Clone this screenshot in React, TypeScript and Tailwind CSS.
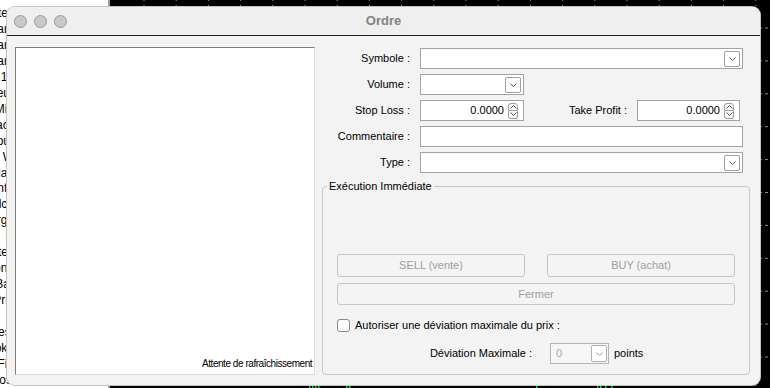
import React from 'react'

const sideWords = [
  'Ventes', 'Montant', 'Montant', 'Montant', '15', 'Valeur', 'Min', 'Facil', 'Jour', 'W', 'Plan', 'Vente',
  'Calcu', 'Marga', 'R', 'Ventes', 'Fond', 'Bar', 'Prix', 'I', 'Best', 'Stoke', 'Fin',
]

function Chevron({ up = false, color = '#555' }: { up?: boolean; color?: string }) {
  return (
    <svg width="7" height="4" viewBox="0 0 7 4" className="block">
      <path d={up ? 'M0.5 3.5 L3.5 0.5 L6.5 3.5' : 'M0.5 0.5 L3.5 3.5 L6.5 0.5'} fill="none" stroke={color} strokeWidth="1" />
    </svg>
  )
}

function Select({ className = '' }: { className?: string }) {
  return (
    <div className={`shrink-0 h-[21px] border border-[#a3a3a3] bg-white flex items-center justify-end pr-[2px] ${className}`}>
      <div className="w-[16px] h-[16px] border border-[#a0a0a0] rounded-[2px] bg-white flex items-center justify-center">
        <Chevron />
      </div>
    </div>
  )
}

function Spin({ className = '' }: { className?: string }) {
  return (
    <div className={`shrink-0 h-[21px] border border-[#a3a3a3] bg-white flex items-center justify-end pr-[5px] gap-[4px] ${className}`}>
      <span className="text-[11px] leading-none text-black">0.0000</span>
      <div className="flex flex-col">
        <div className="w-[10px] h-[8px] border border-[#a0a0a0] rounded-t-[3px] bg-white flex items-center justify-center">
          <Chevron up />
        </div>
        <div className="w-[10px] h-[8px] border border-t-0 border-[#a0a0a0] rounded-b-[3px] bg-white flex items-center justify-center">
          <Chevron />
        </div>
      </div>
    </div>
  )
}

function Row({ label, children }: { label: string; children: React.ReactNode }) {
  return (
    <div className="flex items-center h-[21px]">
      <span className="shrink-0 w-[88px] mr-[10px] text-right text-[11px] text-black">{label}</span>
      {children}
    </div>
  )
}

function ChartGrid() {
  const vx = Array.from({ length: 21 }, (_, i) => 33 + i * 32.2)
  const hy = Array.from({ length: 12 }, (_, i) => 28 + i * 32.9)
  return (
    <svg className="w-full h-full block" viewBox="0 0 658 388">
      {vx.map((x) => (
        <line key={x} x1={x} y1="0" x2={x} y2="388" stroke="#7f8da3" strokeWidth="1" strokeDasharray="1 4" />
      ))}
      {hy.map((y) => (
        <line key={y} x1="0" y1={y} x2="658" y2={y} stroke="#7f8da3" strokeWidth="1" strokeDasharray="3 3" />
      ))}
      {[198, 201, 204, 207, 235, 238, 425, 486, 489, 494, 500].map((x) => (
        <rect key={x} x={x} y="384" width="1.5" height="4" fill="#22c55e" />
      ))}
    </svg>
  )
}

export default function App() {
  return (
    <div className="relative w-[770px] h-[388px] overflow-hidden bg-black flex font-['Liberation_Sans',Arial,sans-serif]">
      {/* background app: side list */}
      <div className="w-[110px] shrink-0 bg-white border-r-2 border-[#9a9a9a] flex flex-col pt-[5px] text-[12px] leading-[16px] text-black">
        {sideWords.map((w, i) => (
          <div key={i} className="w-[14px] flex justify-end overflow-hidden whitespace-nowrap">
            {w}
          </div>
        ))}
        <div className="-ml-[12px] whitespace-nowrap">Closure</div>
      </div>
      {/* background app: chart */}
      <div className="flex-1">
        <ChartGrid />
      </div>

      {/* dialog window */}
      <div className="absolute left-[7px] top-[7px] w-[753px] h-[378px] rounded-[8px] bg-[#f3f3f3] ring-1 ring-[#c4c4c4] overflow-hidden flex flex-col">
        <div className="h-[29px] shrink-0 bg-[#efefef] border-b border-[#1e1e1e] grid grid-cols-[1fr_auto_1fr] items-center">
          <div className="flex items-center gap-[7px] pl-[7px]">
            <span className="w-[13px] h-[13px] rounded-full bg-[#c9c9c9] border border-[#9a9a9a]" />
            <span className="w-[13px] h-[13px] rounded-full bg-[#c9c9c9] border border-[#9a9a9a]" />
            <span className="w-[13px] h-[13px] rounded-full bg-[#c9c9c9] border border-[#9a9a9a]" />
          </div>
          <span className="text-[13px] font-bold text-[#828282]">Ordre</span>
          <div />
        </div>

        <div className="flex pl-[8px] pt-[11px] gap-[7px]">
          {/* left panel */}
          <div className="shrink-0 w-[300px] h-[328px] bg-white border border-t-[#7d7d7d] border-l-[#7d7d7d] border-r-[#dcdcdc] border-b-[#dcdcdc] flex items-end overflow-hidden pb-[3px] pl-[186px]">
            <span className="text-[10px] tracking-[-0.45px] text-black whitespace-nowrap">Attente de rafraîchissement</span>
          </div>

          {/* right column */}
          <div className="w-[428px] flex flex-col">
            <div className="flex flex-col gap-[5px] pt-[1px]">
              <Row label="Symbole :">
                <Select className="w-[323px]" />
              </Row>
              <Row label="Volume :">
                <Select className="w-[104px]" />
              </Row>
              <Row label="Stop Loss :">
                <Spin className="w-[104px]" />
                <span className="flex-1 text-right text-[11px] text-black">Take Profit :</span>
                <Spin className="w-[103px] ml-[10px] mr-[10px]" />
              </Row>
              <Row label="Commentaire :">
                <div className="w-[323px] h-[21px] border border-[#a3a3a3] bg-white" />
              </Row>
              <Row label="Type :">
                <Select className="w-[323px]" />
              </Row>
            </div>

            <fieldset className="mt-[7px] border border-[#c6c6c6] rounded-[4px]">
              <legend className="ml-[4px] px-[2px] text-[11px] leading-[13px] text-black">Exécution Immédiate</legend>
              <div className="pt-[61px] px-[14px] pb-[10px] flex flex-col">
                <div className="grid grid-cols-2 gap-x-[22px]">
                  <button className="h-[23px] border border-[#c5c5c5] rounded-[3px] bg-[#f4f4f4] text-[11px] text-[#9d9d9d]">SELL (vente)</button>
                  <button className="h-[23px] border border-[#c5c5c5] rounded-[3px] bg-[#f4f4f4] text-[11px] text-[#9d9d9d]">BUY (achat)</button>
                </div>
                <button className="mt-[6px] h-[22px] border border-[#c5c5c5] rounded-[3px] bg-[#f4f4f4] text-[11px] text-[#9d9d9d]">Fermer</button>

                <div className="mt-[14px] flex items-center gap-[5px] h-[13px]">
                  <span className="w-[13px] h-[13px] border border-[#8a8a8a] rounded-[3px] bg-white" />
                  <span className="text-[11px] text-black">Autoriser une déviation maximale du prix :</span>
                </div>

                <div className="mt-[11px] flex items-center h-[21px]">
                  <span className="w-[195px] text-right text-[11px] text-black">Déviation Maximale :</span>
                  <div className="ml-[18px] w-[59px] h-[21px] border border-[#b4b4b4] bg-[#f6f6f6] flex items-center justify-between pl-[5px] pr-[1px]">
                    <span className="text-[11px] text-[#a8a8a8]">0</span>
                    <div className="w-[16px] h-[17px] border border-[#b0b0b0] rounded-[2px] bg-white flex items-center justify-center">
                      <Chevron color="#999" />
                    </div>
                  </div>
                  <span className="ml-[5px] text-[11px] text-black">points</span>
                </div>
              </div>
            </fieldset>
          </div>
        </div>
      </div>
    </div>
  )
}
